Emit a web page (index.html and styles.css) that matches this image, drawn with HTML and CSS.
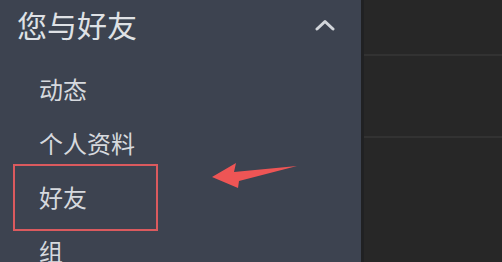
FILE: index.html
```html
<!DOCTYPE html>
<html lang="zh-CN">
<head>
    <meta charset="UTF-8">
    <meta name="viewport" content="width=device-width, initial-scale=1.0">
    <title>您与好友</title>
    <link rel="stylesheet" href="styles.css">
</head>
<body>
<div class="layout">
    <!-- Sidebar -->
    <aside class="sidebar">
        <div class="group-head">
            <span class="group-title">您与好友</span>
            <svg class="chevron" width="20" height="12" viewBox="0 0 20 12">
                <polyline points="2,10 10,2.5 18,10" fill="none" stroke="#d3d6db" stroke-width="3" stroke-linecap="round" stroke-linejoin="round"/>
            </svg>
        </div>
        <ul class="menu">
            <li>动态</li>
            <li>个人资料</li>
            <li>好友</li>
            <li>组</li>
        </ul>

        <!-- Annotation -->
        <div class="mark-box"></div>
        <svg class="mark-arrow" width="90" height="30" viewBox="0 0 90 30">
            <polygon points="0,15 24,1 22,10 85,4 27,19 26,26" fill="#ee5555"/>
        </svg>
    </aside>

    <!-- Content -->
    <main class="panel">
        <div class="panel-row row-top"></div>
        <div class="panel-row row-mid"></div>
        <div class="panel-row row-rest"></div>
    </main>
</div>
</body>
</html>
```

FILE: styles.css
```css
/* General Styles */
body {
    margin: 0;
    padding: 0;
    background: #262626;
    font-family: "Noto Sans CJK SC", "Noto Sans", sans-serif;
    overflow: hidden;
}

.layout {
    display: flex;
    width: 502px;
    height: 262px;
    overflow: hidden;
}

/* Sidebar */
.sidebar {
    position: relative;
    width: 361px;
    flex-shrink: 0;
    background: #3d4350;
    color: #d6d9de;
    overflow: hidden;
}

.group-head {
    display: flex;
    align-items: center;
    justify-content: space-between;
    height: 48px;
    padding: 0 26px 0 17px;
}

.group-title {
    font-size: 30px;
    line-height: 1;
    color: #dfe1e5;
}

.chevron {
    display: block;
    margin-top: 1px;
}

.menu {
    list-style: none;
    margin: 14px 0 0;
    padding: 0 0 0 39px;
}

.menu li {
    height: 54px;
    line-height: 54px;
    font-size: 24px;
}

.mark-box {
    position: absolute;
    left: 13px;
    top: 164px;
    width: 141px;
    height: 63px;
    border: 2.5px solid #db5a5e;
}

.mark-arrow {
    position: absolute;
    left: 212px;
    top: 162px;
}

/* Content */
.panel {
    flex: 1;
    display: flex;
    flex-direction: column;
    border-left: 3px solid #202123;
    background: #272727;
}

.panel-row {
    border-bottom: 2px solid #323232;
}

.row-top {
    height: 54px;
}

.row-mid {
    height: 80px;
}

.row-rest {
    flex: 1;
    border-bottom: none;
}
```
